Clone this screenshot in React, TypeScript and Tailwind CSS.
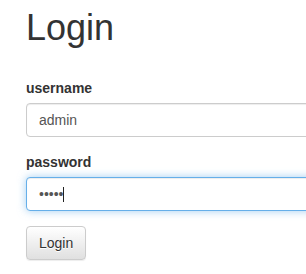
export default function App() {
  return (
    <div className="w-[306px] h-[274px] overflow-hidden bg-white pl-[26px] pt-[8px] font-['Liberation_Sans',Arial,sans-serif] text-[#333]">
      <h1 className="text-[36px] leading-[40px] font-normal">Login</h1>

      <form className="mt-[30px] w-[300px]" onSubmit={(e) => e.preventDefault()}>
        <div className="mb-[15px]">
          <label className="block mb-[5px] text-[14px] leading-[20px] font-bold">username</label>
          <input
            type="text"
            defaultValue="admin"
            readOnly
            className="block w-full h-[34px] px-3 py-1.5 text-[14px] leading-[20px] text-[#555] bg-white border border-[#ccc] rounded-[4px] shadow-[inset_0_1px_1px_rgba(0,0,0,0.075)] outline-none"
          />
        </div>

        <div className="mb-[15px]">
          <label className="block mb-[5px] text-[14px] leading-[20px] font-bold">password</label>
          <div className="relative">
            <input
              type="password"
              defaultValue="admin"
              readOnly
              className="block w-full h-[34px] px-3 py-1.5 text-[14px] leading-[20px] text-[#555] bg-white border border-[#66afe9] rounded-[4px] shadow-[inset_0_1px_1px_rgba(0,0,0,0.075),0_0_8px_rgba(102,175,233,0.6)] outline-none caret-transparent"
            />
            {/* caret */}
            <span className="absolute left-[37px] top-[10px] w-px h-[15px] bg-[#222]" />
          </div>
        </div>

        <button
          type="submit"
          className="px-3 py-1.5 text-[14px] leading-[20px] text-[#333] border border-[#ccc] rounded-[4px] bg-linear-to-b from-white to-[#e0e0e0] shadow-[inset_0_1px_0_rgba(255,255,255,0.15),0_1px_1px_rgba(0,0,0,0.075)] [text-shadow:0_1px_0_#fff]"
        >
          Login
        </button>
      </form>
    </div>
  );
}
